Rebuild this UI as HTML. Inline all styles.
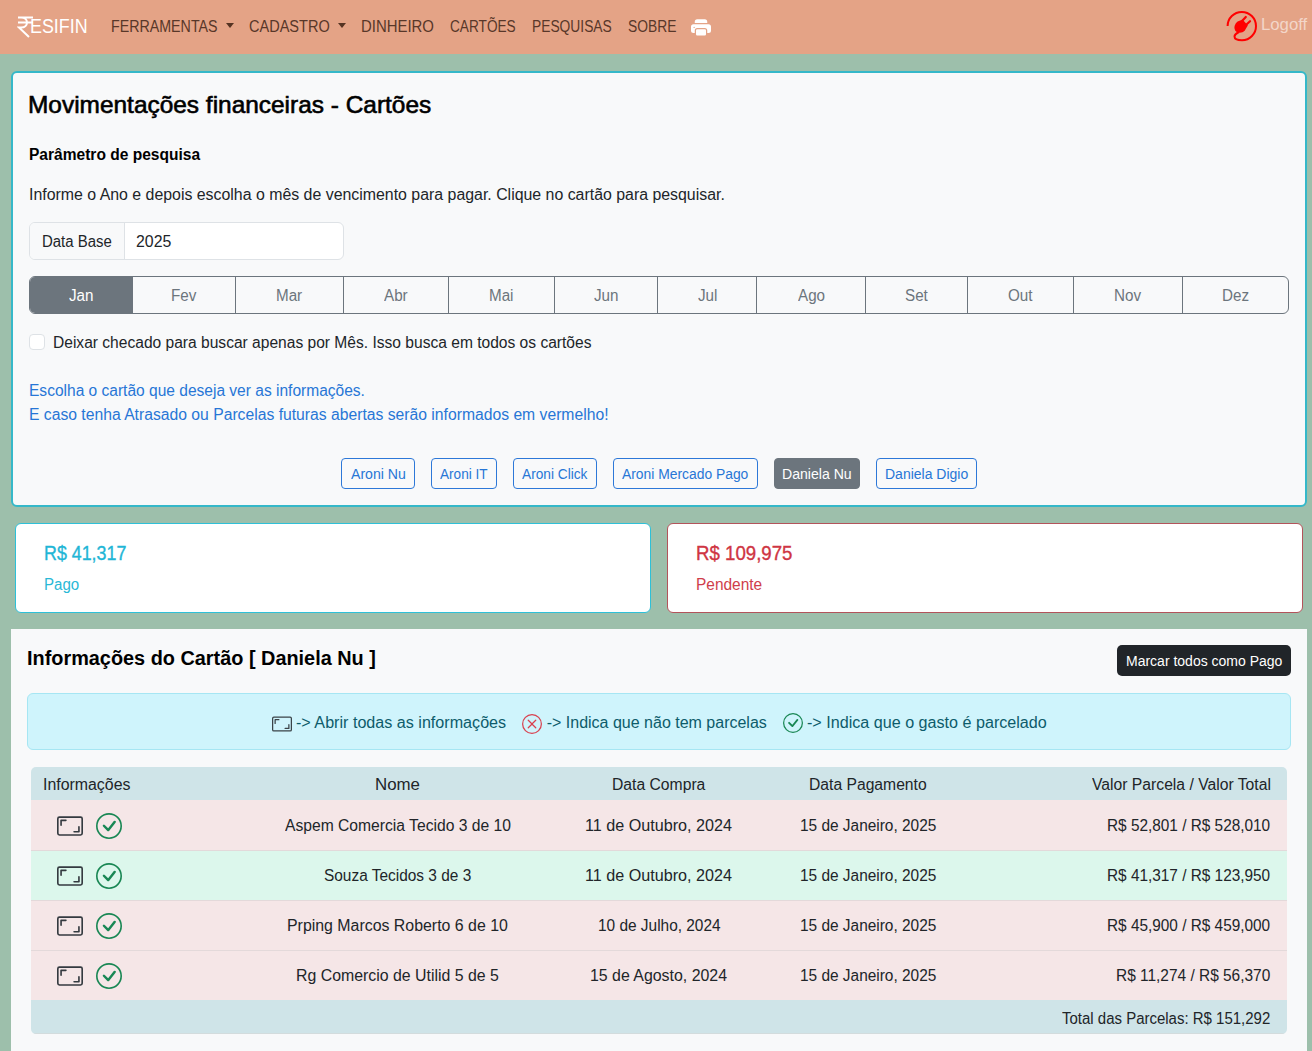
<!DOCTYPE html>
<html lang="pt-BR">
<head>
<meta charset="utf-8">
<title>Movimentações financeiras - Cartões</title>
<style>
*{box-sizing:border-box;margin:0;padding:0}
html,body{width:1312px;height:1051px;overflow:hidden}
body{position:relative;background:#9dbfab;font-family:"Liberation Sans",sans-serif;color:#212529;font-size:16px}
.a{position:absolute}
.t{position:absolute;white-space:nowrap;line-height:0;transform-origin:0 0}
.nav{left:0;top:0;width:1312px;height:54px;background:#e4a386}
.caret{position:absolute;width:0;height:0;border-left:4px solid transparent;border-right:4px solid transparent;border-top:5px solid #553322}
.card1{left:11px;top:71px;width:1296px;height:436px;border:2px solid #35b8c9;border-radius:6px;background:#f8f9fa}
.card2{left:15px;top:523px;width:636px;height:90px;border:1px solid #2ec0d8;border-radius:6px;background:#fff}
.card3{left:667px;top:523px;width:636px;height:90px;border:1px solid #b3545b;border-radius:6px;background:#fff}
.sec3{left:11px;top:629px;width:1296px;height:440px;background:#f8f9fa}
.ig{left:29px;top:222px;width:315px;height:38px;border:1px solid #dee2e6;border-radius:6px;background:#fff;overflow:hidden}
.ig .add{position:absolute;left:0;top:0;width:95px;height:36px;background:#f8f9fa;border-right:1px solid #dee2e6}
.bg{left:29px;top:276px;width:1260px;height:38px;border:1px solid #6c757d;border-radius:6px;overflow:hidden}
.mb{position:absolute;top:0;height:36px;border-left:1px solid #6c757d}
.chk{left:29px;top:334px;width:16px;height:16px;border:1px solid #dee2e6;border-radius:4px;background:#fff}
.cb{position:absolute;top:458px;height:31px;border:1px solid #2d78d8;border-radius:4px}
.alert{left:27px;top:693px;width:1264px;height:57px;background:#cff4fc;border:1px solid #a6e6f3;border-radius:6px}
.tbl{left:31px;top:767px;width:1256px;height:267px;border-radius:5px;overflow:hidden}
.th{position:absolute;left:0;width:1256px;background:#cfe4e8}
.tr{position:absolute;left:0;width:1256px;height:50px}
.pink{background:#f5e6e7}
.green{background:#dcf7ec}
.bd{border-top:1px solid #e3d9da}
</style>
</head>
<body>
<div class="a nav"></div>
<svg class="a" style="left:17px;top:15px" width="17" height="24" viewBox="0 0 17 24"><path d="M1 2.5H16 M1 7.5H16 M4 2.5 C12 2.5 12 12.5 4 12.5 H2 L12 22" fill="none" stroke="#fff" stroke-width="2"/></svg>
<div class="caret" style="left:226px;top:23px"></div>
<div class="caret" style="left:338px;top:23px"></div>
<svg class="a" style="left:691px;top:17.5px" width="20" height="20" viewBox="0 0 16 16" fill="#fff"><path d="M5 1a2 2 0 0 0-2 2v1h10V3a2 2 0 0 0-2-2zm6 8H5a1 1 0 0 0-1 1v3a1 1 0 0 0 1 1h6a1 1 0 0 0 1-1v-3a1 1 0 0 0-1-1"/><path d="M0 7a2 2 0 0 1 2-2h12a2 2 0 0 1 2 2v3a2 2 0 0 1-2 2h-1v-2a2 2 0 0 0-2-2H5a2 2 0 0 0-2 2v2H2a2 2 0 0 1-2-2zm2.5 1a.5.5 0 1 0 0-1 .5.5 0 0 0 0 1"/></svg>
<svg class="a" style="left:1225px;top:9px" width="34" height="34" viewBox="0 0 34 34"><path d="M2.6 17 A14.2 14.2 0 1 1 17 31.3 C12.5 31.3 9.5 30 9.5 27.5 C9.5 25 12 24 14 23" fill="none" stroke="#f00" stroke-width="2"/><path d="M10.2 21.5 C8.6 18.8 9.6 15 12.6 12.6 L17.6 10.4 L22.8 16.6 L19.8 21.6 C17 24.6 12 24.4 10.2 21.5Z" fill="#f00"/><path d="M17.5 11.5 L20.8 8 M21.5 15.5 L25 12.2" stroke="#f00" stroke-width="2.2" stroke-linecap="round"/></svg>

<div class="a card1"></div>
<div class="a ig"><div class="add"></div></div>
<div class="a bg">
  <div class="mb" style="left:0;width:102px;background:#6c757d;border-left:0"></div>
  <div class="mb" style="left:102px;width:103px"></div>
  <div class="mb" style="left:205px;width:108px"></div>
  <div class="mb" style="left:313px;width:105px"></div>
  <div class="mb" style="left:418px;width:106px"></div>
  <div class="mb" style="left:524px;width:103px"></div>
  <div class="mb" style="left:627px;width:99px"></div>
  <div class="mb" style="left:726px;width:109px"></div>
  <div class="mb" style="left:835px;width:102px"></div>
  <div class="mb" style="left:937px;width:106px"></div>
  <div class="mb" style="left:1043px;width:109px"></div>
  <div class="mb" style="left:1152px;width:106px"></div>
</div>
<div class="a chk"></div>
<div class="cb" style="left:341px;width:74px"></div>
<div class="cb" style="left:431px;width:66px"></div>
<div class="cb" style="left:513px;width:84px"></div>
<div class="cb" style="left:613px;width:145px"></div>
<div class="cb" style="left:774px;width:86px;background:#6c757d;border-color:#6c757d"></div>
<div class="cb" style="left:876px;width:101px"></div>

<div class="a card2"></div>
<div class="a card3"></div>

<div class="a sec3"></div>
<div class="a" style="left:1117px;top:645px;width:174px;height:31px;background:#212529;border-radius:5px"></div>
<div class="a alert"></div>
<svg class="a" style="left:272px;top:713.5px" width="20" height="20" viewBox="0 0 16 16" fill="#3a4247"><path d="M0 3.5A1.5 1.5 0 0 1 1.5 2h13A1.5 1.5 0 0 1 16 3.5v9a1.5 1.5 0 0 1-1.5 1.5h-13A1.5 1.5 0 0 1 0 12.5zM1.5 3a.5.5 0 0 0-.5.5v9a.5.5 0 0 0 .5.5h13a.5.5 0 0 0 .5-.5v-9a.5.5 0 0 0-.5-.5z"/><path d="M2 4.5a.5.5 0 0 1 .5-.5h3a.5.5 0 0 1 0 1H3v2.5a.5.5 0 0 1-1 0zm12 7a.5.5 0 0 1-.5.5h-3a.5.5 0 0 1 0-1H13V8.5a.5.5 0 0 1 1 0z"/></svg>
<svg class="a" style="left:522px;top:714px" width="20" height="20" viewBox="0 0 16 16" fill="#d9414f"><path d="M8 15A7 7 0 1 1 8 1a7 7 0 0 1 0 14m0 1A8 8 0 1 0 8 0a8 8 0 0 0 0 16"/><path d="M4.646 4.646a.5.5 0 0 1 .708 0L8 7.293l2.646-2.647a.5.5 0 0 1 .708.708L8.707 8l2.647 2.646a.5.5 0 0 1-.708.708L8 8.707l-2.646 2.647a.5.5 0 0 1-.708-.708L7.293 8 4.646 5.354a.5.5 0 0 1 0-.708"/></svg>
<svg class="a" style="left:783px;top:713px" width="20" height="20" viewBox="0 0 16 16" fill="#198754"><path d="M8 15A7 7 0 1 1 8 1a7 7 0 0 1 0 14m0 1A8 8 0 1 0 8 0a8 8 0 0 0 0 16"/><path d="m10.97 4.97-.02.022-3.473 4.425-2.093-2.094a.75.75 0 0 0-1.06 1.06L6.97 11.03a.75.75 0 0 0 1.079-.02l3.992-4.99a.75.75 0 0 0-1.071-1.05"/></svg>

<div class="a tbl">
  <div class="th" style="top:0;height:33px"></div>
  <div class="tr pink" style="top:33px"></div>
  <div class="tr green bd" style="top:83px"></div>
  <div class="tr pink bd" style="top:133px"></div>
  <div class="tr pink bd" style="top:183px"></div>
  <div class="th" style="top:233px;height:34px;border-bottom:1px solid #d3dcdd"></div>
</div>
<svg class="a" style="left:57px;top:813px" width="26" height="26" viewBox="0 0 16 16" fill="#343a40"><path d="M0 3.5A1.5 1.5 0 0 1 1.5 2h13A1.5 1.5 0 0 1 16 3.5v9a1.5 1.5 0 0 1-1.5 1.5h-13A1.5 1.5 0 0 1 0 12.5zM1.5 3a.5.5 0 0 0-.5.5v9a.5.5 0 0 0 .5.5h13a.5.5 0 0 0 .5-.5v-9a.5.5 0 0 0-.5-.5z"/><path d="M2 4.5a.5.5 0 0 1 .5-.5h3a.5.5 0 0 1 0 1H3v2.5a.5.5 0 0 1-1 0zm12 7a.5.5 0 0 1-.5.5h-3a.5.5 0 0 1 0-1H13V8.5a.5.5 0 0 1 1 0z"/></svg>
<svg class="a" style="left:96px;top:813px" width="26" height="26" viewBox="0 0 16 16" fill="#198754"><path d="M8 15A7 7 0 1 1 8 1a7 7 0 0 1 0 14m0 1A8 8 0 1 0 8 0a8 8 0 0 0 0 16"/><path d="m10.97 4.97-.02.022-3.473 4.425-2.093-2.094a.75.75 0 0 0-1.06 1.06L6.97 11.03a.75.75 0 0 0 1.079-.02l3.992-4.99a.75.75 0 0 0-1.071-1.05"/></svg>
<svg class="a" style="left:57px;top:863px" width="26" height="26" viewBox="0 0 16 16" fill="#343a40"><path d="M0 3.5A1.5 1.5 0 0 1 1.5 2h13A1.5 1.5 0 0 1 16 3.5v9a1.5 1.5 0 0 1-1.5 1.5h-13A1.5 1.5 0 0 1 0 12.5zM1.5 3a.5.5 0 0 0-.5.5v9a.5.5 0 0 0 .5.5h13a.5.5 0 0 0 .5-.5v-9a.5.5 0 0 0-.5-.5z"/><path d="M2 4.5a.5.5 0 0 1 .5-.5h3a.5.5 0 0 1 0 1H3v2.5a.5.5 0 0 1-1 0zm12 7a.5.5 0 0 1-.5.5h-3a.5.5 0 0 1 0-1H13V8.5a.5.5 0 0 1 1 0z"/></svg>
<svg class="a" style="left:96px;top:863px" width="26" height="26" viewBox="0 0 16 16" fill="#198754"><path d="M8 15A7 7 0 1 1 8 1a7 7 0 0 1 0 14m0 1A8 8 0 1 0 8 0a8 8 0 0 0 0 16"/><path d="m10.97 4.97-.02.022-3.473 4.425-2.093-2.094a.75.75 0 0 0-1.06 1.06L6.97 11.03a.75.75 0 0 0 1.079-.02l3.992-4.99a.75.75 0 0 0-1.071-1.05"/></svg>
<svg class="a" style="left:57px;top:913px" width="26" height="26" viewBox="0 0 16 16" fill="#343a40"><path d="M0 3.5A1.5 1.5 0 0 1 1.5 2h13A1.5 1.5 0 0 1 16 3.5v9a1.5 1.5 0 0 1-1.5 1.5h-13A1.5 1.5 0 0 1 0 12.5zM1.5 3a.5.5 0 0 0-.5.5v9a.5.5 0 0 0 .5.5h13a.5.5 0 0 0 .5-.5v-9a.5.5 0 0 0-.5-.5z"/><path d="M2 4.5a.5.5 0 0 1 .5-.5h3a.5.5 0 0 1 0 1H3v2.5a.5.5 0 0 1-1 0zm12 7a.5.5 0 0 1-.5.5h-3a.5.5 0 0 1 0-1H13V8.5a.5.5 0 0 1 1 0z"/></svg>
<svg class="a" style="left:96px;top:913px" width="26" height="26" viewBox="0 0 16 16" fill="#198754"><path d="M8 15A7 7 0 1 1 8 1a7 7 0 0 1 0 14m0 1A8 8 0 1 0 8 0a8 8 0 0 0 0 16"/><path d="m10.97 4.97-.02.022-3.473 4.425-2.093-2.094a.75.75 0 0 0-1.06 1.06L6.97 11.03a.75.75 0 0 0 1.079-.02l3.992-4.99a.75.75 0 0 0-1.071-1.05"/></svg>
<svg class="a" style="left:57px;top:963px" width="26" height="26" viewBox="0 0 16 16" fill="#343a40"><path d="M0 3.5A1.5 1.5 0 0 1 1.5 2h13A1.5 1.5 0 0 1 16 3.5v9a1.5 1.5 0 0 1-1.5 1.5h-13A1.5 1.5 0 0 1 0 12.5zM1.5 3a.5.5 0 0 0-.5.5v9a.5.5 0 0 0 .5.5h13a.5.5 0 0 0 .5-.5v-9a.5.5 0 0 0-.5-.5z"/><path d="M2 4.5a.5.5 0 0 1 .5-.5h3a.5.5 0 0 1 0 1H3v2.5a.5.5 0 0 1-1 0zm12 7a.5.5 0 0 1-.5.5h-3a.5.5 0 0 1 0-1H13V8.5a.5.5 0 0 1 1 0z"/></svg>
<svg class="a" style="left:96px;top:963px" width="26" height="26" viewBox="0 0 16 16" fill="#198754"><path d="M8 15A7 7 0 1 1 8 1a7 7 0 0 1 0 14m0 1A8 8 0 1 0 8 0a8 8 0 0 0 0 16"/><path d="m10.97 4.97-.02.022-3.473 4.425-2.093-2.094a.75.75 0 0 0-1.06 1.06L6.97 11.03a.75.75 0 0 0 1.079-.02l3.992-4.99a.75.75 0 0 0-1.071-1.05"/></svg>
<div class="t" style="left:29.71px;top:25.77px;font-size:20px;font-weight:normal;color:#fff;transform:scaleX(0.8934)">ESIFIN</div>
<div class="t" style="left:111.11px;top:27.16px;font-size:16px;font-weight:normal;color:#583729;transform:scaleX(0.8898)">FERRAMENTAS</div>
<div class="t" style="left:249.09px;top:27.16px;font-size:16px;font-weight:normal;color:#583729;transform:scaleX(0.9080)">CADASTRO</div>
<div class="t" style="left:361.47px;top:27.16px;font-size:16px;font-weight:normal;color:#583729;transform:scaleX(0.9325)">DINHEIRO</div>
<div class="t" style="left:449.65px;top:27.16px;font-size:16px;font-weight:normal;color:#583729;transform:scaleX(0.8526)">CARTÕES</div>
<div class="t" style="left:531.84px;top:27.16px;font-size:16px;font-weight:normal;color:#583729;transform:scaleX(0.8626)">PESQUISAS</div>
<div class="t" style="left:627.74px;top:27.16px;font-size:16px;font-weight:normal;color:#583729;transform:scaleX(0.8630)">SOBRE</div>
<div class="t" style="left:1260.95px;top:25.16px;font-size:16px;font-weight:normal;color:#f3d6c9;transform:scaleX(1.0465)">Logoff</div>
<div class="t" style="left:27.96px;top:105.08px;font-size:24px;font-weight:normal;-webkit-text-stroke:0.6px;color:#000;transform:scaleX(1.0178)">Movimentações financeiras - Cartões</div>
<div class="t" style="left:29.03px;top:154.86px;font-size:16px;font-weight:bold;color:#000;transform:scaleX(0.9714)">Parâmetro de pesquisa</div>
<div class="t" style="left:29.01px;top:195.36px;font-size:16px;font-weight:normal;color:#212529;transform:scaleX(0.9928)">Informe o Ano e depois escolha o mês de vencimento para pagar. Clique no cartão para pesquisar.</div>
<div class="t" style="left:41.87px;top:241.96px;font-size:16px;font-weight:normal;color:#212529;transform:scaleX(0.9342)">Data Base</div>
<div class="t" style="left:136.11px;top:241.96px;font-size:16px;font-weight:normal;color:#212529;transform:scaleX(0.9912)">2025</div>
<div class="t" style="left:68.88px;top:296.46px;font-size:16px;font-weight:normal;color:#fff;transform:scaleX(0.9500)">Jan</div>
<div class="t" style="left:170.70px;top:296.46px;font-size:16px;font-weight:normal;color:#6c757d;transform:scaleX(0.9500)">Fev</div>
<div class="t" style="left:275.73px;top:296.46px;font-size:16px;font-weight:normal;color:#6c757d;transform:scaleX(0.9500)">Mar</div>
<div class="t" style="left:384.12px;top:296.46px;font-size:16px;font-weight:normal;color:#6c757d;transform:scaleX(0.9500)">Abr</div>
<div class="t" style="left:489.15px;top:296.46px;font-size:16px;font-weight:normal;color:#6c757d;transform:scaleX(0.9500)">Mai</div>
<div class="t" style="left:594.12px;top:296.46px;font-size:16px;font-weight:normal;color:#6c757d;transform:scaleX(0.9500)">Jun</div>
<div class="t" style="left:697.50px;top:296.46px;font-size:16px;font-weight:normal;color:#6c757d;transform:scaleX(0.9500)">Jul</div>
<div class="t" style="left:797.70px;top:296.46px;font-size:16px;font-weight:normal;color:#6c757d;transform:scaleX(0.9500)">Ago</div>
<div class="t" style="left:904.62px;top:296.46px;font-size:16px;font-weight:normal;color:#6c757d;transform:scaleX(0.9500)">Set</div>
<div class="t" style="left:1007.67px;top:296.46px;font-size:16px;font-weight:normal;color:#6c757d;transform:scaleX(0.9500)">Out</div>
<div class="t" style="left:1113.75px;top:296.46px;font-size:16px;font-weight:normal;color:#6c757d;transform:scaleX(0.9500)">Nov</div>
<div class="t" style="left:1221.97px;top:296.46px;font-size:16px;font-weight:normal;color:#6c757d;transform:scaleX(0.9500)">Dez</div>
<div class="t" style="left:52.73px;top:343.06px;font-size:16px;font-weight:normal;color:#212529;transform:scaleX(0.9734)">Deixar checado para buscar apenas por Mês. Isso busca em todos os cartões</div>
<div class="t" style="left:29.03px;top:391.16px;font-size:16px;font-weight:normal;color:#2776d6;transform:scaleX(0.9709)">Escolha o cartão que deseja ver as informações.</div>
<div class="t" style="left:29.02px;top:415.16px;font-size:16px;font-weight:normal;color:#2776d6;transform:scaleX(0.9813)">E caso tenha Atrasado ou Parcelas futuras abertas serão informados em vermelho!</div>
<div class="t" style="left:351.00px;top:474.05px;font-size:14px;font-weight:normal;color:#2776d6;transform:scaleX(1.0074)">Aroni Nu</div>
<div class="t" style="left:440.00px;top:474.05px;font-size:14px;font-weight:normal;color:#2776d6;transform:scaleX(0.9714)">Aroni IT</div>
<div class="t" style="left:522.40px;top:474.05px;font-size:14px;font-weight:normal;color:#2776d6;transform:scaleX(0.9776)">Aroni Click</div>
<div class="t" style="left:622.30px;top:474.05px;font-size:14px;font-weight:normal;color:#2776d6;transform:scaleX(0.9898)">Aroni Mercado Pago</div>
<div class="t" style="left:781.79px;top:474.05px;font-size:14px;font-weight:normal;color:#fff;transform:scaleX(1.0059)">Daniela Nu</div>
<div class="t" style="left:885.00px;top:474.05px;font-size:14px;font-weight:normal;color:#2776d6">Daniela Digio</div>
<div class="t" style="left:44.41px;top:552.97px;font-size:20px;font-weight:normal;-webkit-text-stroke:0.35px;color:#1fb6d6;transform:scaleX(0.8923)">R$ 41,317</div>
<div class="t" style="left:44.36px;top:585.06px;font-size:16px;font-weight:normal;color:#29b8d6;transform:scaleX(0.9417)">Pago</div>
<div class="t" style="left:695.97px;top:553.17px;font-size:20px;font-weight:normal;-webkit-text-stroke:0.35px;color:#cf3543;transform:scaleX(0.9324)">R$ 109,975</div>
<div class="t" style="left:695.93px;top:584.76px;font-size:16px;font-weight:normal;color:#cf3e4b;transform:scaleX(0.9657)">Pendente</div>
<div class="t" style="left:27.11px;top:658.37px;font-size:20px;font-weight:bold;color:#000;transform:scaleX(0.9934)">Informações do Cartão [ Daniela Nu ]</div>
<div class="t" style="left:1126.00px;top:661.15px;font-size:14px;font-weight:normal;color:#fff">Marcar todos como Pago</div>
<div class="t" style="left:295.99px;top:723.16px;font-size:16px;font-weight:normal;color:#0d5c6b;transform:scaleX(1.0077)">-&gt; Abrir todas as informações</div>
<div class="t" style="left:546.70px;top:723.16px;font-size:16px;font-weight:normal;color:#0d5c6b">-&gt; Indica que não tem parcelas</div>
<div class="t" style="left:806.99px;top:723.16px;font-size:16px;font-weight:normal;color:#0d5c6b;transform:scaleX(1.0076)">-&gt; Indica que o gasto é parcelado</div>
<div class="t" style="left:43.21px;top:785.16px;font-size:16px;font-weight:normal;color:#212529;transform:scaleX(0.9931)">Informações</div>
<div class="t" style="left:375.05px;top:785.16px;font-size:16px;font-weight:normal;color:#212529;transform:scaleX(1.0537)">Nome</div>
<div class="t" style="left:612.22px;top:785.16px;font-size:16px;font-weight:normal;color:#212529;transform:scaleX(0.9809)">Data Compra</div>
<div class="t" style="left:808.82px;top:785.16px;font-size:16px;font-weight:normal;color:#212529;transform:scaleX(0.9798)">Data Pagamento</div>
<div class="t" style="left:1091.80px;top:785.16px;font-size:16px;font-weight:normal;color:#212529;transform:scaleX(0.9812)">Valor Parcela / Valor Total</div>
<div class="t" style="left:285.40px;top:826.16px;font-size:16px;font-weight:normal;color:#212529;transform:scaleX(0.9783)">Aspem Comercia Tecido 3 de 10</div>
<div class="t" style="left:585.49px;top:826.16px;font-size:16px;font-weight:normal;color:#212529;transform:scaleX(1.0090)">11 de Outubro, 2024</div>
<div class="t" style="left:799.74px;top:826.16px;font-size:16px;font-weight:normal;color:#212529;transform:scaleX(0.9636)">15 de Janeiro, 2025</div>
<div class="t" style="left:1107.24px;top:826.16px;font-size:16px;font-weight:normal;color:#212529;transform:scaleX(0.9601)">R$ 52,801 / R$ 528,010</div>
<div class="t" style="left:323.94px;top:876.16px;font-size:16px;font-weight:normal;color:#212529;transform:scaleX(0.9642)">Souza Tecidos 3 de 3</div>
<div class="t" style="left:585.49px;top:876.16px;font-size:16px;font-weight:normal;color:#212529;transform:scaleX(1.0090)">11 de Outubro, 2024</div>
<div class="t" style="left:799.74px;top:876.16px;font-size:16px;font-weight:normal;color:#212529;transform:scaleX(0.9636)">15 de Janeiro, 2025</div>
<div class="t" style="left:1107.24px;top:876.16px;font-size:16px;font-weight:normal;color:#212529;transform:scaleX(0.9601)">R$ 41,317 / R$ 123,950</div>
<div class="t" style="left:287.31px;top:926.16px;font-size:16px;font-weight:normal;color:#212529;transform:scaleX(0.9932)">Prping Marcos Roberto 6 de 10</div>
<div class="t" style="left:597.64px;top:926.16px;font-size:16px;font-weight:normal;color:#212529;transform:scaleX(0.9635)">10 de Julho, 2024</div>
<div class="t" style="left:799.74px;top:926.16px;font-size:16px;font-weight:normal;color:#212529;transform:scaleX(0.9636)">15 de Janeiro, 2025</div>
<div class="t" style="left:1107.24px;top:926.16px;font-size:16px;font-weight:normal;color:#212529;transform:scaleX(0.9601)">R$ 45,900 / R$ 459,000</div>
<div class="t" style="left:296.41px;top:976.16px;font-size:16px;font-weight:normal;color:#212529;transform:scaleX(0.9916)">Rg Comercio de Utilid 5 de 5</div>
<div class="t" style="left:590.31px;top:976.16px;font-size:16px;font-weight:normal;color:#212529;transform:scaleX(0.9934)">15 de Agosto, 2024</div>
<div class="t" style="left:799.74px;top:976.16px;font-size:16px;font-weight:normal;color:#212529;transform:scaleX(0.9636)">15 de Janeiro, 2025</div>
<div class="t" style="left:1116.03px;top:976.16px;font-size:16px;font-weight:normal;color:#212529;transform:scaleX(0.9652)">R$ 11,274 / R$ 56,370</div>
<div class="t" style="left:1061.80px;top:1018.76px;font-size:16px;font-weight:normal;color:#212529;transform:scaleX(0.9365)">Total das Parcelas: R$ 151,292</div>
</body>
</html>
